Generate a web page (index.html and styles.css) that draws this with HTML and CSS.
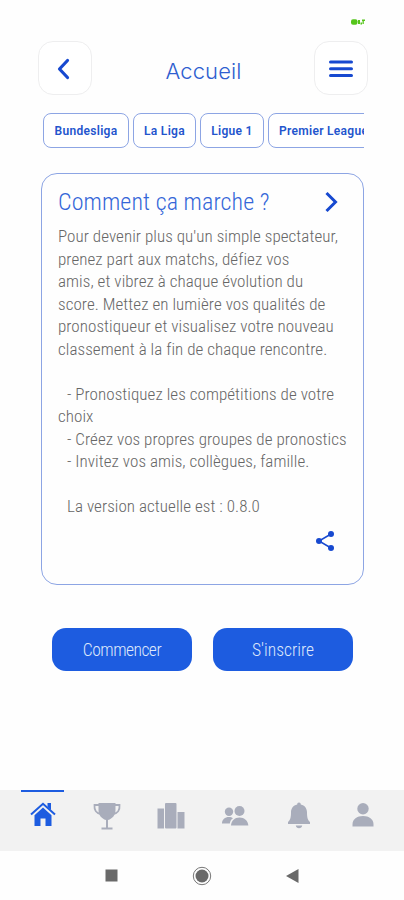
FILE: index.html
```html
<!DOCTYPE html>
<html lang="fr">
<head>
    <meta charset="UTF-8">
    <meta name="viewport" content="width=device-width, initial-scale=1.0">
    <title>Accueil</title>
    <link rel="stylesheet" href="styles.css">
</head>
<body>

<div class="status">
    <svg width="15" height="8" viewBox="0 0 15 8"><rect x="0" y="1.2" width="6.5" height="5.5" rx="2"/><path d="M7 2h2v4H7zM9.500 4.500h1.500v2H9.500zM11 1.500h3v1.500h-1.200v3h-1.300v-3H11z"/></svg>
</div>

<header class="header">
    <button class="square-btn" type="button" aria-label="Retour">
        <svg width="54" height="54" viewBox="0 0 54 54"><path d="M29.500 19.500L21.500 28l8 8.500" stroke-width="3.200"/></svg>
    </button>
    <h1 class="title">Accueil</h1>
    <button class="square-btn" type="button" aria-label="Menu">
        <svg width="54" height="54" viewBox="0 0 54 54"><path d="M16.500 21h21M16.500 27.700h21M16.500 34.400h21" stroke-width="3"/></svg>
    </button>
</header>

<nav class="leagues">
    <button class="league bundesliga" type="button">Bundesliga</button>
    <button class="league liga" type="button">La Liga</button>
    <button class="league ligue1" type="button">Ligue 1</button>
    <button class="league premier" type="button">Premier League</button>
</nav>

<main class="card">
    <div class="card-head">
        <h2 class="card-title">Comment ça marche ?</h2>
        <svg class="next" width="14" height="22" viewBox="0 0 14 22"><path d="M1.500 2L10.500 11l-9 9"/></svg>
    </div>
    <div class="text">
        <div>Pour devenir plus qu'un simple spectateur,</div>
        <div>prenez part aux matchs, défiez vos</div>
        <div>amis, et vibrez à chaque évolution du</div>
        <div>score. Mettez en lumière vos qualités de</div>
        <div>pronostiqueur et visualisez votre nouveau</div>
        <div>classement à la fin de chaque rencontre.</div>
        <br>
        <div class="item">- Pronostiquez les compétitions de votre</div>
        <div>choix</div>
        <div class="item">- Créez vos propres groupes de pronostics</div>
        <div class="item">- Invitez vos amis, collègues, famille.</div>
        <br>
        <div class="item">La version actuelle est : 0.8.0</div>
    </div>
    <svg class="share" width="20" height="22" viewBox="0 0 20 22"><path d="M16 4L4 11l12 7"/><circle cx="16" cy="4" r="3"/><circle cx="4" cy="11" r="3"/><circle cx="16" cy="18" r="3"/></svg>
</main>

<div class="actions">
    <button class="action start" type="button">Commencer</button>
    <button class="action signup" type="button">S'inscrire</button>
</div>

<nav class="tabs">
    <a class="tab active">
        <svg width="28" height="28" viewBox="0 0 28 28"><path d="M14 6.500l8.500 7.700V25h-6v-7.500h-5V25h-6V14.200z"/><path d="M18.500 2h3.500v7l-3.500-3z"/><path class="roof" d="M2 13.500L14 2.800l12 10.700"/></svg>
    </a>
    <a class="tab">
        <svg width="28" height="30" viewBox="0 0 28 30"><path d="M5.500 2h17v7c0 5-3 8.700-7.500 10v7.500h4.500v2h-11v-2H13V19c-4.500-1.300-7.500-5-7.500-10z"/><path class="handle" d="M6 4H1.500c-.5 5 2 8.500 6.500 9M22 4h4.500c.5 5-2 8.500-6.500 9"/></svg>
    </a>
    <a class="tab">
        <svg width="28" height="28" viewBox="0 0 28 28"><rect x="0.500" y="7.500" width="6.500" height="20"/><rect x="8" y="2" width="11.500" height="25.500" rx="1"/><rect x="20.500" y="11" width="7" height="16.500"/></svg>
    </a>
    <a class="tab">
        <svg width="28" height="28" viewBox="0 0 28 28"><circle cx="8" cy="10.700" r="4.200"/><path d="M1 22.500c0-4 3-6.500 7-6.500 1.600 0 3 .4 4 1.200-2 1.300-2.900 3-3.200 5.300z"/><circle cx="18.500" cy="10" r="5"/><path d="M10 24.500c.3-5 3.700-8 8.500-8s8.500 3 8.800 8z"/></svg>
    </a>
    <a class="tab">
        <svg width="28" height="28" viewBox="0 0 28 28"><path d="M14 1.500c1.200 0 1.800.8 1.800 1.900 4 .8 6.200 4 6.200 8.100 0 5 .8 7.500 3 9.500V23H3v-2c2.200-2 3-4.500 3-9.500 0-4.100 2.200-7.300 6.200-8.100 0-1.100.6-1.900 1.800-1.900zM10.800 24.500h6.400c-.3 1.800-1.500 2.700-3.200 2.700s-2.900-.9-3.200-2.700z"/></svg>
    </a>
    <a class="tab">
        <svg width="28" height="28" viewBox="0 0 28 28"><circle cx="14" cy="7.700" r="5.700"/><path d="M3.500 25.500v-2c0-5.500 4.500-8.500 10.500-8.500s10.500 3 10.500 8.500v2z"/></svg>
    </a>
</nav>

<div class="android">
    <svg width="13" height="13" viewBox="0 0 13 13"><rect x="0.500" y="0.500" width="12" height="12"/></svg>
    <svg width="20" height="20" viewBox="0 0 20 20"><circle cx="10" cy="10" r="6.500"/><circle class="ring" cx="10" cy="10" r="8.700"/></svg>
    <svg width="13" height="14" viewBox="0 0 13 14"><path d="M0 7L12.500 0v14z"/></svg>
</div>

</body>
</html>
```

FILE: styles.css
```css
* {
    box-sizing: border-box;
}
html, body {
    height: 900px;
    margin: 0;
    padding: 0;
}
body {
    display: flex;
    flex-direction: column;
    overflow: hidden;
    background-color: #fefefe;
    font-family: Roboto, "Liberation Sans", sans-serif;
}
button {
    margin: 0;
    padding: 0;
    font-family: inherit;
    cursor: pointer;
}
svg {
    display: block;
    flex: none;
}
.status {
    display: flex;
    justify-content: flex-end;
    height: 41px;
    padding: 18px 38px 0 0;
    fill: #55c51b;
}
.header {
    display: flex;
    justify-content: space-between;
    align-items: center;
    height: 54px;
    padding: 0 36px 0 38px;
}
.square-btn {
    width: 54px;
    height: 54px;
    border: 1px solid #eeeeef;
    border-radius: 15px;
    background-color: #fff;
}
.square-btn svg {
    margin: -1px;
    fill: none;
    stroke: #1749d0;
    stroke-linecap: round;
    stroke-linejoin: round;
}
.title {
    margin: 6px 0 0 1px;
    color: #2f5fd0;
    font-family: Inter, sans-serif;
    font-size: 22px;
    font-weight: 300;
    letter-spacing: 0.1px;
}
.leagues {
    display: flex;
    gap: 4px;
    width: 321px;
    margin: 18px 0 0 43px;
    overflow: hidden;
}
.league {
    flex: none;
    height: 35px;
    border: 1px solid #8da5e4;
    border-radius: 8px;
    background-color: #fff;
    color: #2355cd;
    font-size: 12px;
    font-weight: 600;
    letter-spacing: 0.3px;
}
.bundesliga {
    width: 86px;
}
.liga {
    width: 63px;
}
.ligue1 {
    width: 64px;
}
.premier {
    width: 112px;
    padding-left: 10px;
    text-align: left;
    white-space: nowrap;
}
.card {
    width: 323px;
    height: 412px;
    margin: 25px 0 0 41px;
    padding: 12px 24px 0 16px;
    border: 1px solid #8da5e4;
    border-radius: 16px;
}
.card-head {
    display: flex;
    justify-content: space-between;
    align-items: center;
    height: 32px;
    margin-bottom: 7px;
}
.card-title {
    margin: 0;
    color: #3466d8;
    font-size: 24px;
    font-weight: 300;
    font-stretch: 75%;
    letter-spacing: 0.1px;
    white-space: nowrap;
}
.next {
    fill: none;
    stroke: #1749d0;
    stroke-width: 3;
}
.text {
    color: #666;
    font-size: 17px;
    font-weight: 300;
    font-stretch: 75%;
    letter-spacing: 0.06px;
    line-height: 22.5px;
    white-space: nowrap;
}
.item {
    padding-left: 9px;
}
.share {
    margin: 12px 0 0 257px;
    fill: #1749d0;
    stroke: #1749d0;
}
.share path {
    fill: none;
    stroke-width: 1.5;
}
.share circle {
    stroke: none;
}
.actions {
    display: flex;
    gap: 21px;
    margin: 43px 0 0 52px;
}
.action {
    width: 140px;
    height: 43px;
    border: 0;
    border-radius: 14px;
    background-color: #1d5ce0;
    color: #dfe8fb;
    font-size: 17.5px;
    font-weight: 300;
    font-stretch: 75%;
}
.start {
    letter-spacing: -0.5px;
}
.tabs {
    display: flex;
    height: 61px;
    margin-top: 119px;
    padding: 0 10px;
    background-color: #f2f2f2;
}
.tab {
    display: flex;
    flex: 1;
    justify-content: center;
    padding: 11px 0 0 1px;
    fill: #a9adbb;
}
.tab.active {
    fill: #1d5ce0;
    background: linear-gradient(#1d5ce0, #1d5ce0) 11px 0 / 43px 2px no-repeat;
}
.roof {
    fill: none;
    stroke: #1d5ce0;
    stroke-width: 2;
}
.handle {
    fill: none;
    stroke: #a9adbb;
    stroke-width: 1.8;
}
.android {
    display: flex;
    justify-content: space-between;
    align-items: center;
    height: 49px;
    padding: 0 105px;
    fill: #696969;
}
.ring {
    fill: none;
    stroke: #777;
    stroke-width: 1;
}
```
